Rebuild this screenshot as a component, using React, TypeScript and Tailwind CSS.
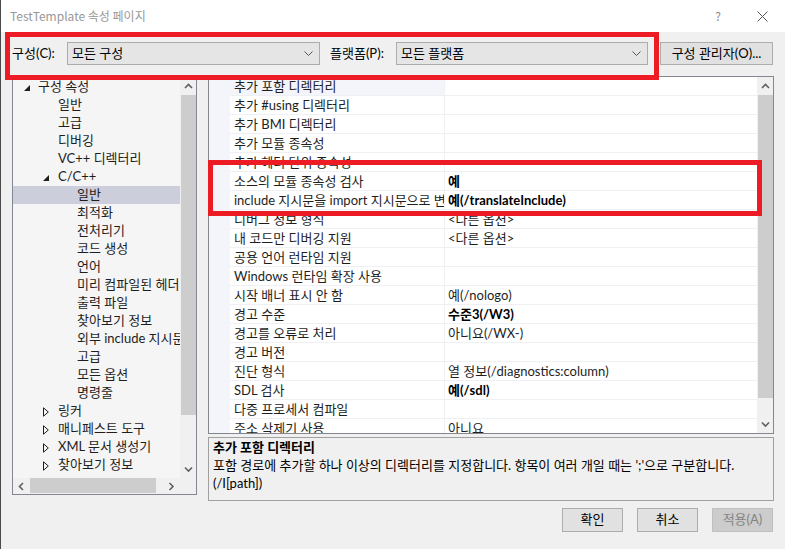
import React from 'react';

const FONT = { fontFamily: 'Lato, "Noto Sans CJK KR", sans-serif' };
const TITLE_FONT = { fontFamily: '"Noto Sans CJK KR", "Noto Sans", sans-serif' };

type TreeItem = { t: string; lvl: 0 | 1 | 2; exp?: 'open' | 'closed'; sel?: boolean };

const treeItems: TreeItem[] = [
  { t: '구성 속성', lvl: 0, exp: 'open' },
  { t: '일반', lvl: 1 },
  { t: '고급', lvl: 1 },
  { t: '디버깅', lvl: 1 },
  { t: 'VC++ 디렉터리', lvl: 1 },
  { t: 'C/C++', lvl: 1, exp: 'open' },
  { t: '일반', lvl: 2, sel: true },
  { t: '최적화', lvl: 2 },
  { t: '전처리기', lvl: 2 },
  { t: '코드 생성', lvl: 2 },
  { t: '언어', lvl: 2 },
  { t: '미리 컴파일된 헤더', lvl: 2 },
  { t: '출력 파일', lvl: 2 },
  { t: '찾아보기 정보', lvl: 2 },
  { t: '외부 include 지시문', lvl: 2 },
  { t: '고급', lvl: 2 },
  { t: '모든 옵션', lvl: 2 },
  { t: '명령줄', lvl: 2 },
  { t: '링커', lvl: 1, exp: 'closed' },
  { t: '매니페스트 도구', lvl: 1, exp: 'closed' },
  { t: 'XML 문서 생성기', lvl: 1, exp: 'closed' },
  { t: '찾아보기 정보', lvl: 1, exp: 'closed' },
];

const props: [string, string, boolean?][] = [
  ['추가 포함 디렉터리', ''],
  ['추가 #using 디렉터리', ''],
  ['추가 BMI 디렉터리', ''],
  ['추가 모듈 종속성', ''],
  ['추가 헤더 단위 종속성', ''],
  ['소스의 모듈 종속성 검사', '예', true],
  ['include 지시문을 import 지시문으로 변환', '예(/translateInclude)', true],
  ['디버그 정보 형식', '<다른 옵션>'],
  ['내 코드만 디버깅 지원', '<다른 옵션>'],
  ['공용 언어 런타임 지원', ''],
  ['Windows 런타임 확장 사용', ''],
  ['시작 배너 표시 안 함', '예(/nologo)'],
  ['경고 수준', '수준3(/W3)', true],
  ['경고를 오류로 처리', '아니요(/WX-)'],
  ['경고 버전', ''],
  ['진단 형식', '열 정보(/diagnostics:column)'],
  ['SDL 검사', '예(/sdl)', true],
  ['다중 프로세서 컴파일', ''],
  ['주소 삭제기 사용', '아니요'],
];

const Chevron = ({ dir }: { dir: 'up' | 'down' | 'left' | 'right' }) => {
  const d = {
    up: 'M1 5 L4.5 1.5 L8 5',
    down: 'M1 1.5 L4.5 5 L8 1.5',
    left: 'M5 1 L1.5 4.5 L5 8',
    right: 'M1.5 1 L5 4.5 L1.5 8',
  }[dir];
  const w = dir === 'up' || dir === 'down' ? 9 : 7;
  const h = dir === 'up' || dir === 'down' ? 7 : 9;
  return (
    <svg width={w} height={h} viewBox={`0 0 ${w} ${h}`}>
      <path d={d} fill="none" stroke="#606060" strokeWidth="1.6" />
    </svg>
  );
};

const Dropdown = ({ text, width }: { text: string; width: string }) => (
  <div className={`${width} h-[23px] border border-[#acacac] bg-[#e5e5e5] flex items-center justify-between pl-[4px] pr-[6px]`}>
    <span className="text-black">{text}</span>
    <svg width="9" height="6" viewBox="0 0 9 6">
      <path d="M0.5 0.5 L4.5 4.5 L8.5 0.5" fill="none" stroke="#555" strokeWidth="1" />
    </svg>
  </div>
);

const TreeRow = ({ item }: { item: TreeItem }) => {
  const pad = item.lvl === 0 ? 'pl-[25px]' : item.lvl === 1 ? 'pl-[45px]' : 'pl-[64px]';
  const triLeft = item.lvl === 0 ? 'left-[11px]' : 'left-[30px]';
  return (
    <div
      className={`relative h-[18px] flex items-center whitespace-nowrap text-[#1e1e1e] ${pad} ${
        item.sel ? 'bg-[#cccedb]' : ''
      }`}
    >
      {item.exp === 'open' && (
        <svg width="6" height="6" viewBox="0 0 6 6" className={`absolute ${triLeft} top-[7px]`}>
          <path d="M6 0 L6 6 L0 6 Z" fill="#1e1e1e" />
        </svg>
      )}
      {item.exp === 'closed' && (
        <svg width="6" height="10" viewBox="0 0 6 10" className={`absolute ${triLeft} top-[5px]`}>
          <path d="M0.5 0.8 L5.3 5 L0.5 9.2 Z" fill="none" stroke="#1e1e1e" strokeWidth="1" />
        </svg>
      )}
      {item.t}
    </div>
  );
};

export default function App() {
  return (
    <div
      className="relative w-[791px] h-[549px] flex flex-col bg-white border-l border-[#4a4a4a] overflow-hidden text-[13px]"
      style={FONT}
    >
      {/* title bar */}
      <div className="h-[32px] shrink-0 bg-white flex items-center pl-[9px] pr-[23px]" style={TITLE_FONT}>
        <span className="text-[12px] text-[#999999] flex-1">TestTemplate 속성 페이지</span>
        <span className="text-[12px] text-[#888] mr-[36px]">?</span>
        <svg width="11" height="11" viewBox="0 0 11 11">
          <path d="M0.5 0.5 L10.5 10.5 M10.5 0.5 L0.5 10.5" stroke="#555" strokeWidth="1" />
        </svg>
      </div>

      <div className="flex-1 mr-[6px] bg-[#f0f0f0] flex flex-col">
        {/* configuration row */}
        <div className="flex items-center h-[23px] mt-[10px] pl-[11px] text-black">
          <span className="w-[55px]">구성(C):</span>
          <Dropdown text="모든 구성" width="w-[253px]" />
          <span className="ml-[10px] w-[66px]">플랫폼(P):</span>
          <Dropdown text="모든 플랫폼" width="w-[252px]" />
          <div className="ml-[12px] w-[113px] h-[23px] border border-[#adadad] bg-[#e1e1e1] flex items-center justify-center whitespace-nowrap">
            구성 관리자(O)...
          </div>
        </div>

        {/* main area */}
        <div className="flex items-start mt-[11px]">
          {/* tree */}
          <div className="ml-[11px] mt-[1px] w-[185px] h-[418px] border border-[#828790] bg-[#f5f5f5] flex flex-col">
            <div className="flex h-[400px]">
              <div className="w-[167px] overflow-hidden">
                {treeItems.map((it, i) => (
                  <TreeRow key={i} item={it} />
                ))}
              </div>
              <div className="w-[16px] bg-[#f0f0f0] flex flex-col items-center">
                <div className="h-[17px] flex items-center">
                  <Chevron dir="up" />
                </div>
                <div className="w-[15px] h-[320px] bg-[#cdcdcd]" />
                <div className="flex-1" />
                <div className="h-[17px] flex items-center">
                  <Chevron dir="down" />
                </div>
              </div>
            </div>
            <div className="flex h-[16px] bg-[#f0f0f0]">
              <div className="w-[17px] flex items-center justify-center">
                <Chevron dir="left" />
              </div>
              <div className="w-[126px] h-[15px] bg-[#cdcdcd]" />
              <div className="w-[7px]" />
              <div className="w-[17px] flex items-center justify-center">
                <Chevron dir="right" />
              </div>
            </div>
          </div>

          {/* right column */}
          <div className="ml-[11px] w-[566px] flex flex-col">
            <div className="h-[358px] border border-[#828790] bg-white flex">
              <div className="flex-1 overflow-hidden">
                {props.map(([name, val, bold], i) => (
                  <div key={i} className="flex h-[19px] text-[#1e1e1e]">
                    <div className="w-[21px] shrink-0 bg-[#f3f5fa]" />
                    <div
                      className={`w-[215px] shrink-0 border-b border-r border-[#eef0f4] pl-[4px] overflow-hidden whitespace-nowrap leading-[18px] ${
                        i === 0 ? 'bg-[#f3f5fa]' : ''
                      }`}
                    >
                      {name}
                    </div>
                    <div
                      className={`flex-1 border-b border-[#eef0f4] pl-[3px] overflow-hidden whitespace-nowrap leading-[18px] ${
                        bold ? 'font-bold text-black' : ''
                      }`}
                    >
                      {val}
                    </div>
                  </div>
                ))}
              </div>
              <div className="w-[16px] bg-[#f0f0f0] flex flex-col items-center">
                <div className="h-[18px] flex items-center">
                  <Chevron dir="up" />
                </div>
                <div className="w-[15px] h-[303px] bg-[#cdcdcd]" />
                <div className="flex-1" />
                <div className="h-[17px] flex items-center">
                  <Chevron dir="down" />
                </div>
              </div>
            </div>

            <div className="mt-[3px] h-[64px] border border-[#a0a0a0] bg-[#f0f0f0] px-[4px] text-black leading-[18px] whitespace-nowrap">
              <div className="font-bold">추가 포함 디렉터리</div>
              <div>포함 경로에 추가할 하나 이상의 디렉터리를 지정합니다. 항목이 여러 개일 때는 ';'으로 구분합니다.</div>
              <div>(/I[path])</div>
            </div>
          </div>
        </div>

        {/* buttons */}
        <div className="flex justify-end gap-[14px] mt-[7px] pr-[12px]">
          <div className="w-[61px] h-[24px] border border-[#adadad] bg-[#e1e1e1] flex items-center justify-center text-black">
            확인
          </div>
          <div className="w-[61px] h-[24px] border border-[#adadad] bg-[#e1e1e1] flex items-center justify-center text-black">
            취소
          </div>
          <div className="w-[61px] h-[24px] border border-[#bfbfbf] bg-[#cccccc] flex items-center justify-center text-[#838383]">
            적용(A)
          </div>
        </div>
      </div>

      {/* red highlight boxes drawn over the dialog */}
      <div className="absolute left-[4px] top-[32px] w-[654px] h-[48px] border-[5px] border-[#ed1c24] pointer-events-none" />
      <div className="absolute left-[207px] top-[160px] w-[554px] h-[56px] border-[5px] border-[#ed1c24] pointer-events-none" />
    </div>
  );
}
